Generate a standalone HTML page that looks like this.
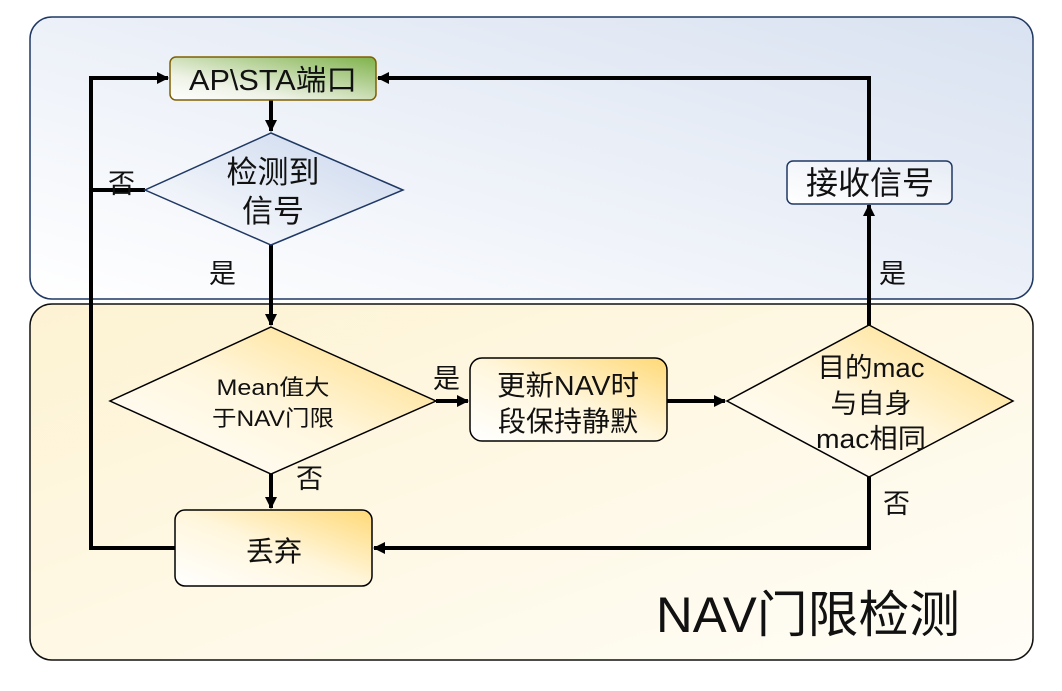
<!DOCTYPE html>
<html><head><meta charset="utf-8"><style>
html,body{margin:0;padding:0;background:#fff;}
svg{display:block;}
text{font-family:"Liberation Sans","Noto Sans CJK SC",sans-serif;fill:#111;}
</style></head><body>
<svg width="1062" height="691" viewBox="0 0 1062 691" xmlns="http://www.w3.org/2000/svg">
<defs>
<linearGradient id="gb" x1="0" y1="1" x2="1" y2="0"><stop offset="0" stop-color="#ffffff"/><stop offset="1" stop-color="#d9e2f1"/></linearGradient>
<linearGradient id="gy" x1="0" y1="0" x2="1" y2="1"><stop offset="0" stop-color="#fdf3d3"/><stop offset="1" stop-color="#fffdf7"/></linearGradient>
<linearGradient id="gg" x1="0" y1="1" x2="1" y2="0"><stop offset="0" stop-color="#ffffff"/><stop offset="0.3" stop-color="#eef2e6"/><stop offset="1" stop-color="#7fb24a"/></linearGradient>
<linearGradient id="gd" x1="0" y1="1" x2="1" y2="0"><stop offset="0" stop-color="#ffffff"/><stop offset="1" stop-color="#c9d6ec"/></linearGradient>
<linearGradient id="go" x1="0" y1="1" x2="1" y2="0"><stop offset="0" stop-color="#ffffff"/><stop offset="0.5" stop-color="#fff6dc"/><stop offset="1" stop-color="#ffd977"/></linearGradient>
<linearGradient id="gw" x1="0" y1="1" x2="1" y2="0"><stop offset="0" stop-color="#ffffff"/><stop offset="1" stop-color="#e6ecf5"/></linearGradient>
<marker id="ar" markerWidth="12" markerHeight="12" refX="11" refY="6" orient="auto" markerUnits="userSpaceOnUse"><path d="M0,0 L12,6 L0,12 Z" fill="#000"/></marker>
</defs>
<rect x="30" y="17" width="1003" height="282" rx="22" fill="url(#gb)" stroke="#1f3864" stroke-width="1.5"/>
<rect x="30" y="304" width="1003" height="356" rx="22" fill="url(#gy)" stroke="#111" stroke-width="1.5"/>

<g stroke="#000" stroke-width="4" fill="none">
<polyline points="271,100 271,131" marker-end="url(#ar)"/>
<polyline points="145,190 91,190"/>
<polyline points="175,548 91,548 91,78 168,78" marker-end="url(#ar)"/>
<polyline points="271,245 271,325" marker-end="url(#ar)"/>
<polyline points="436,401 468,401" marker-end="url(#ar)"/>
<polyline points="667,401 725,401" marker-end="url(#ar)"/>
<polyline points="869,325 869,205" marker-end="url(#ar)"/>
<polyline points="869,161 869,78 378,78" marker-end="url(#ar)"/>
<polyline points="869,477 869,548 374,548" marker-end="url(#ar)"/>
<polyline points="271,474 271,508" marker-end="url(#ar)"/>
</g>

<rect x="170" y="57" width="206" height="43" rx="6" fill="url(#gg)" stroke="#7f6000" stroke-width="1.5"/>
<text x="273" y="90" font-size="29" text-anchor="middle" textLength="168" lengthAdjust="spacingAndGlyphs">AP\STA端口</text>

<polygon points="271,133 403,190 271,245 145,190" fill="url(#gd)" stroke="#1f3864" stroke-width="1.5"/>
<text x="273" y="183" font-size="31" text-anchor="middle">检测到</text>
<text x="273" y="222" font-size="31" text-anchor="middle">信号</text>
<text x="108" y="193" font-size="27">否</text>
<text x="209" y="283" font-size="27">是</text>

<polygon points="271,327 436,401 271,474 110,401" fill="url(#go)" stroke="#000" stroke-width="1.5"/>
<text x="273" y="395" font-size="22" text-anchor="middle" textLength="113" lengthAdjust="spacingAndGlyphs">Mean值大</text>
<text x="273" y="426" font-size="22" text-anchor="middle" textLength="122" lengthAdjust="spacingAndGlyphs">于NAV门限</text>
<text x="433" y="388" font-size="27">是</text>
<text x="296" y="488" font-size="27">否</text>

<rect x="470" y="358" width="197" height="83" rx="12" fill="url(#go)" stroke="#000" stroke-width="1.5"/>
<text x="568" y="395" font-size="28" text-anchor="middle" textLength="142" lengthAdjust="spacingAndGlyphs">更新NAV时</text>
<text x="568" y="431" font-size="28" text-anchor="middle">段保持静默</text>

<polygon points="869,325 1013,401 869,477 727,401" fill="url(#go)" stroke="#000" stroke-width="1.5"/>
<text x="871" y="377" font-size="27" text-anchor="middle" textLength="107" lengthAdjust="spacingAndGlyphs">目的mac</text>
<text x="871" y="413" font-size="27" text-anchor="middle">与自身</text>
<text x="871" y="448" font-size="27" text-anchor="middle" textLength="110" lengthAdjust="spacingAndGlyphs">mac相同</text>
<text x="879" y="283" font-size="27">是</text>
<text x="883" y="513" font-size="27">否</text>

<rect x="787" y="161" width="165" height="43" rx="6" fill="url(#gw)" stroke="#1f3864" stroke-width="1.5"/>
<text x="870" y="194" font-size="32" text-anchor="middle">接收信号</text>

<rect x="175" y="510" width="197" height="76" rx="10" fill="url(#go)" stroke="#000" stroke-width="1.5"/>
<text x="274" y="561" font-size="28" text-anchor="middle">丢弃</text>

<text x="656" y="632" font-size="50" textLength="304" lengthAdjust="spacingAndGlyphs">NAV门限检测</text>
</svg>
</body></html>
